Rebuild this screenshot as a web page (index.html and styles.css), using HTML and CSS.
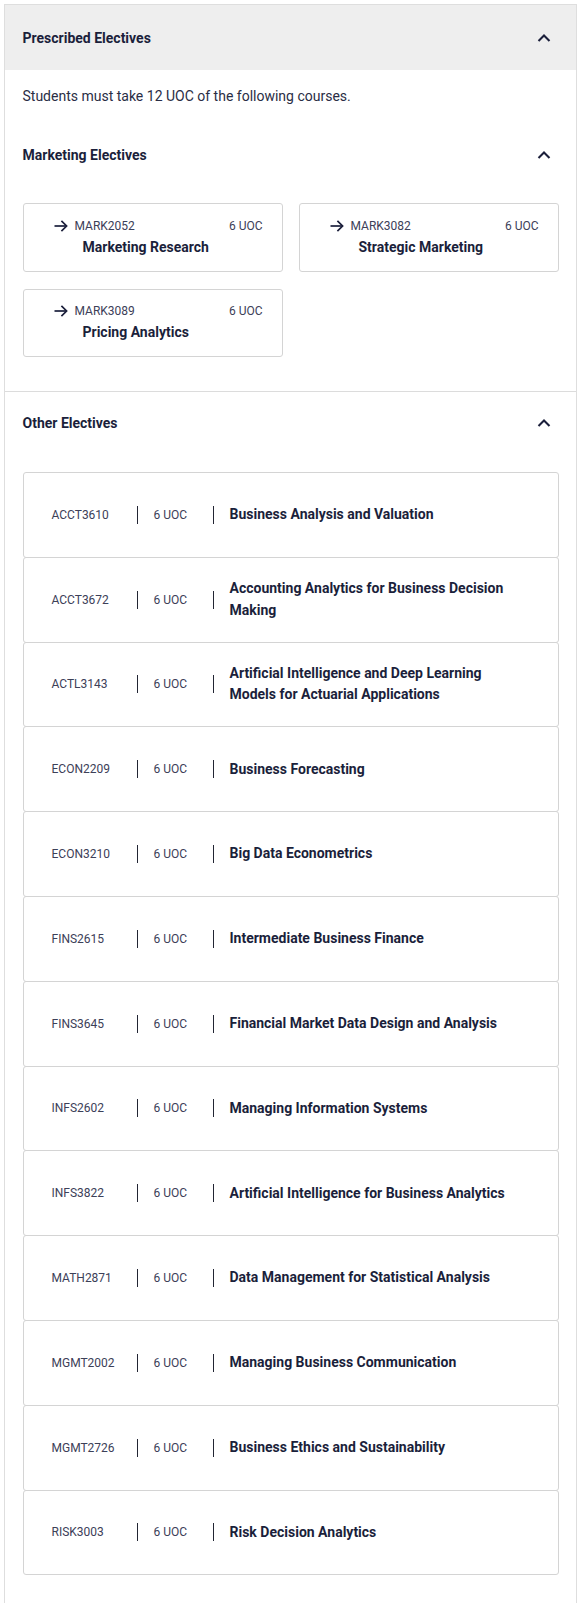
FILE: index.html
```html
<!DOCTYPE html>
<html lang="en">
<head>
<meta charset="utf-8">
<title>Prescribed Electives</title>
<link rel="stylesheet" href="styles.css">
</head>
<body>
<section class="panel">
  <header class="panel-head">
    <h2 class="panel-title">Prescribed Electives</h2>
    <span class="chevron" aria-hidden="true">
      <svg viewBox="0 0 24 24" width="24" height="24"><polyline points="6.5,15 12,9.5 17.5,15"/></svg>
    </span>
  </header>

  <div class="group group-first">
    <p class="intro">Students must take 12 UOC of the following courses.</p>
    <div class="group-head">
      <h3 class="group-title">Marketing Electives</h3>
      <span class="chevron" aria-hidden="true">
        <svg viewBox="0 0 24 24" width="24" height="24"><polyline points="6.5,15 12,9.5 17.5,15"/></svg>
      </span>
    </div>
    <div class="tiles">
      <a class="tile" href="#">
        <svg class="arrow" viewBox="0 0 14 12" width="14" height="12"><line x1="0.5" y1="6" x2="12.6" y2="6"/><polyline points="7.4,0.9 12.6,6 7.4,11.1"/></svg>
        <span class="tile-code">MARK2052</span>
        <span class="tile-uoc">6 UOC</span>
        <span class="tile-name">Marketing Research</span>
      </a>
      <a class="tile" href="#">
        <svg class="arrow" viewBox="0 0 14 12" width="14" height="12"><line x1="0.5" y1="6" x2="12.6" y2="6"/><polyline points="7.4,0.9 12.6,6 7.4,11.1"/></svg>
        <span class="tile-code">MARK3082</span>
        <span class="tile-uoc">6 UOC</span>
        <span class="tile-name">Strategic Marketing</span>
      </a>
      <a class="tile" href="#">
        <svg class="arrow" viewBox="0 0 14 12" width="14" height="12"><line x1="0.5" y1="6" x2="12.6" y2="6"/><polyline points="7.4,0.9 12.6,6 7.4,11.1"/></svg>
        <span class="tile-code">MARK3089</span>
        <span class="tile-uoc">6 UOC</span>
        <span class="tile-name">Pricing Analytics</span>
      </a>
    </div>
  </div>

  <div class="group group-second">
    <div class="group-head">
      <h3 class="group-title">Other Electives</h3>
      <span class="chevron" aria-hidden="true">
        <svg viewBox="0 0 24 24" width="24" height="24"><polyline points="6.5,15 12,9.5 17.5,15"/></svg>
      </span>
    </div>
    <ul class="course-list">
      <li class="course"><span class="course-code">ACCT3610</span><span class="sep"></span><span class="course-uoc">6 UOC</span><span class="sep"></span><span class="course-name">Business Analysis and Valuation</span></li>
      <li class="course"><span class="course-code">ACCT3672</span><span class="sep"></span><span class="course-uoc">6 UOC</span><span class="sep"></span><span class="course-name">Accounting Analytics for Business Decision Making</span></li>
      <li class="course"><span class="course-code">ACTL3143</span><span class="sep"></span><span class="course-uoc">6 UOC</span><span class="sep"></span><span class="course-name">Artificial Intelligence and Deep Learning Models for Actuarial Applications</span></li>
      <li class="course"><span class="course-code">ECON2209</span><span class="sep"></span><span class="course-uoc">6 UOC</span><span class="sep"></span><span class="course-name">Business Forecasting</span></li>
      <li class="course"><span class="course-code">ECON3210</span><span class="sep"></span><span class="course-uoc">6 UOC</span><span class="sep"></span><span class="course-name">Big Data Econometrics</span></li>
      <li class="course"><span class="course-code">FINS2615</span><span class="sep"></span><span class="course-uoc">6 UOC</span><span class="sep"></span><span class="course-name">Intermediate Business Finance</span></li>
      <li class="course"><span class="course-code">FINS3645</span><span class="sep"></span><span class="course-uoc">6 UOC</span><span class="sep"></span><span class="course-name">Financial Market Data Design and Analysis</span></li>
      <li class="course"><span class="course-code">INFS2602</span><span class="sep"></span><span class="course-uoc">6 UOC</span><span class="sep"></span><span class="course-name">Managing Information Systems</span></li>
      <li class="course"><span class="course-code">INFS3822</span><span class="sep"></span><span class="course-uoc">6 UOC</span><span class="sep"></span><span class="course-name">Artificial Intelligence for Business Analytics</span></li>
      <li class="course"><span class="course-code">MATH2871</span><span class="sep"></span><span class="course-uoc">6 UOC</span><span class="sep"></span><span class="course-name">Data Management for Statistical Analysis</span></li>
      <li class="course"><span class="course-code">MGMT2002</span><span class="sep"></span><span class="course-uoc">6 UOC</span><span class="sep"></span><span class="course-name">Managing Business Communication</span></li>
      <li class="course"><span class="course-code">MGMT2726</span><span class="sep"></span><span class="course-uoc">6 UOC</span><span class="sep"></span><span class="course-name">Business Ethics and Sustainability</span></li>
      <li class="course"><span class="course-code">RISK3003</span><span class="sep"></span><span class="course-uoc">6 UOC</span><span class="sep"></span><span class="course-name">Risk Decision Analytics</span></li>
    </ul>
  </div>
</section>
</body>
</html>
```

FILE: styles.css
```css
* {
  box-sizing: border-box;
}

body {
  margin: 0;
  background: #ffffff;
  font-family: Roboto, "Liberation Sans", Arial, sans-serif;
  color: #1b1f3b;
}

.panel {
  margin: 4px 6px 0 4px;
  border: 1px solid #dedede;
  border-bottom: none;
  padding-bottom: 30px;
}

.panel-head {
  display: flex;
  align-items: center;
  justify-content: space-between;
  height: 65px;
  padding: 0 17.5px;
  background: #eeeeee;
}

.panel-title,
.group-title {
  margin: 0;
  font-size: 14px;
  font-weight: 700;
  line-height: 20px;
  color: #1b1f3b;
}

.chevron {
  display: flex;
  width: 24px;
  height: 24px;
  margin-right: 3px;
}

.chevron svg {
  fill: none;
  stroke: #1b1f3b;
  stroke-width: 2.1;
}

.group {
  padding: 0 17.5px;
}

.group-first {
  padding-bottom: 34px;
  border-bottom: 1px solid #dcdcdc;
}

.intro {
  margin: 0;
  padding-top: 16px;
  font-size: 14px;
  line-height: 20px;
  color: #2a2d45;
}

.group-head {
  display: flex;
  align-items: center;
  justify-content: space-between;
  height: 40px;
}

.group-first .group-head {
  margin-top: 29px;
}

.group-second .group-head {
  margin-top: 10.5px;
}

/* two-column tile grid for the marketing courses */
.tiles {
  display: grid;
  grid-template-columns: 1fr 1fr;
  gap: 17px 16px;
  margin-top: 28px;
}

.tile {
  display: grid;
  grid-template-columns: 14px 1fr auto;
  align-items: center;
  align-content: start;
  column-gap: 7px;
  row-gap: 2px;
  height: 68.5px;
  padding: 12.5px 19px 0 30px;
  border: 1px solid #d4d4d4;
  border-radius: 3px;
  text-decoration: none;
  color: #1b1f3b;
}

.arrow {
  fill: none;
  stroke: #1b1f3b;
  stroke-width: 1.7;
}

.tile-code,
.tile-uoc {
  font-size: 12px;
  line-height: 18px;
  color: #3c4058;
}

.tile-name {
  grid-column: 2 / 4;
  padding-left: 8px;
  font-size: 14px;
  font-weight: 700;
  line-height: 21px;
}

/* stacked course rows */
.course-list {
  list-style: none;
  margin: 29.5px 0 0;
  padding: 0;
}

.course {
  display: flex;
  align-items: center;
  height: 85.8px;
  margin-top: -1px;
  padding: 0 28px 0 28px;
  border: 1px solid #d4d4d4;
  border-radius: 3px;
  background: #ffffff;
}

.course:first-child {
  margin-top: 0;
}

.course-code {
  flex: 0 0 69px;
  margin-right: 16px;
  font-size: 12px;
  color: #3c4058;
}

.course-uoc {
  flex: 0 0 43px;
  margin: 0 16px;
  font-size: 12px;
  color: #3c4058;
}

.sep {
  flex: 0 0 1px;
  height: 18px;
  background: #222533;
}

.course-name {
  margin-left: 16px;
  font-size: 14px;
  font-weight: 700;
  line-height: 21.5px;
  color: #1b1f3b;
}
```
